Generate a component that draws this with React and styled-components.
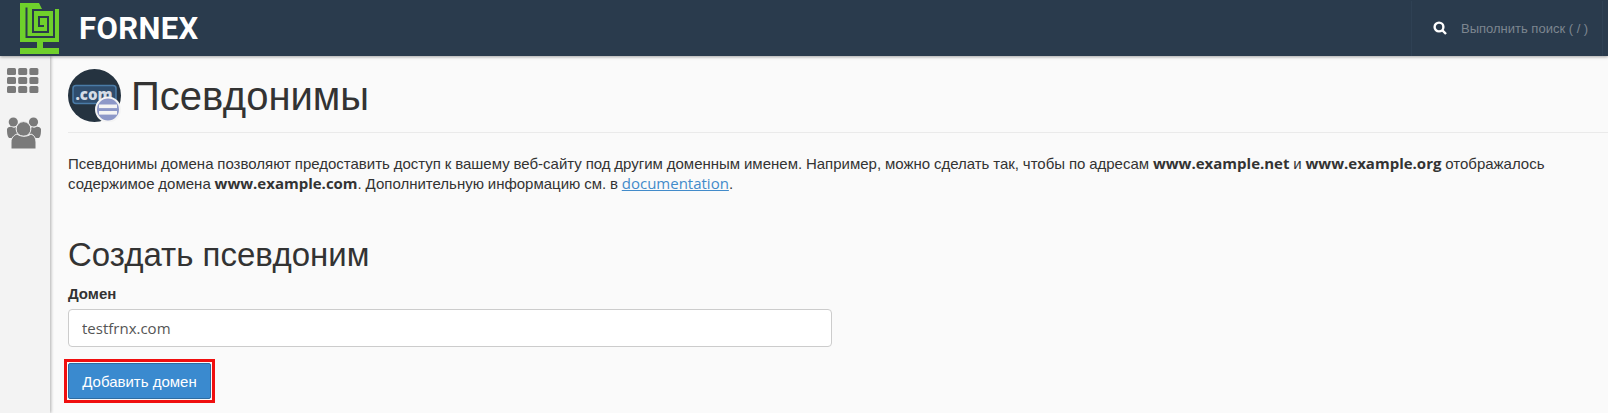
import React from 'react'
import styled, { createGlobalStyle } from 'styled-components'

const GlobalStyle = createGlobalStyle`
  html, body {
    margin: 0;
    height: 100%;
    overflow: hidden;
    background: #fafafa;
    font-family: "Liberation Sans", sans-serif;
    color: #333;
  }
`

const Page = styled.div`
  height: 413px;
  display: flex;
  flex-direction: column;
`

const Header = styled.header`
  height: 56px;
  flex: none;
  display: flex;
  align-items: center;
  background: #2a3b4d;
  box-shadow: 0 1px 3px rgba(0, 0, 0, 0.35);
  position: relative;
  z-index: 2;
`

const Logo = styled.div`
  display: flex;
  align-items: center;
  padding-left: 20px;
  gap: 19px;
  flex: 1;
`

const LogoText = styled.span`
  font-family: "Roboto", sans-serif;
  font-weight: 700;
  font-size: 31px;
  letter-spacing: 0.4px;
  color: #fff;
`

const SearchBox = styled.div`
  width: 192px;
  margin-right: 5px;
  height: 55px;
  box-sizing: border-box;
  border-left: 1px solid #2f4154;
  border-right: 1px solid #2f4154;
  display: flex;
  align-items: center;
  gap: 14px;
  padding-left: 21px;
  font-size: 13px;
  color: #7d8690;
  white-space: nowrap;
`

const Body = styled.div`
  flex: 1;
  display: flex;
  min-height: 0;
`

const Sidebar = styled.nav`
  width: 50px;
  flex: none;
  box-sizing: border-box;
  background: #f3f3f3;
  box-shadow: 1px 0 3px rgba(0, 0, 0, 0.3);
  display: flex;
  flex-direction: column;
  align-items: flex-start;
  padding: 12px 0 0 7px;
  gap: 24px;
`

const Main = styled.main`
  flex: 1;
  padding: 13px 0 0 18px;
  min-width: 0;
`

const TitleRow = styled.div`
  display: flex;
  align-items: center;
  gap: 10px;
  padding-bottom: 10px;
  border-bottom: 1px solid #eaeaea;
`

const Title = styled.h1`
  margin: 0;
  font-size: 40px;
  font-weight: 400;
  line-height: 52px;
  color: #333;
`

const Intro = styled.p`
  margin: 21px 0 0;
  font-size: 15px;
  line-height: 20px;
  word-spacing: -0.35px;
  color: #333;
  white-space: nowrap;
`

const Latin = styled.span`
  font-family: "Open Sans", sans-serif;
  font-weight: ${({ $bold }) => ($bold ? 700 : 400)};
  line-height: 1;
`

const DocLink = styled.a`
  font-family: "Open Sans", sans-serif;
  color: #428bca;
  line-height: 1;
  text-decoration: underline;
`

const Subtitle = styled.h2`
  margin: 40px 0 0;
  font-size: 33px;
  font-weight: 400;
  line-height: 42px;
  color: #333;
`

const Label = styled.label`
  display: block;
  margin-top: 8px;
  font-size: 15px;
  font-weight: 700;
  line-height: 20px;
`

const Input = styled.input`
  display: block;
  box-sizing: border-box;
  width: 764px;
  height: 38px;
  margin-top: 5px;
  padding: 0 13px;
  border: 1px solid #ccc;
  border-radius: 4px;
  background: #fff;
  font: 400 15px "Open Sans", sans-serif;
  color: #555;
  outline: none;
`

const Highlight = styled.div`
  width: fit-content;
  margin: 12px 0 0 -4px;
  padding: 1px;
  border: 3px solid #f00f0f;
`

const Button = styled.button`
  display: block;
  box-sizing: border-box;
  width: 143px;
  height: 36px;
  border: 1px solid #2d6ca2;
  border-radius: 2px;
  background: #3a8acf;
  color: #fff;
  font: 400 15px "Liberation Sans", sans-serif;
  padding: 0;
`

const LogoMark = () => (
  <svg width="40" height="53" viewBox="0 0 40 53" fill="none">
    <path d="M0 1H19L22 7H39V40H0Z" fill="#6fd02b" />
    <path d="M6.5 5.5V35H34V8H13V30H28V15H19V24H24" stroke="#2a3b4d" strokeWidth="2" />
    <path d="M17 40H23V46H17Z" fill="#6fd02b" />
    <path d="M0 46H39V52H0Z" fill="#6fd02b" />
  </svg>
)

const GridIcon = () => (
  <svg width="32" height="25" viewBox="0 0 32 25" fill="#7a7a7a">
    {[0, 11.2, 22.4].map((x) =>
      [0, 9, 18].map((y) => <rect key={`${x}-${y}`} x={x} y={y} width="9" height="7" rx="1.5" />)
    )}
  </svg>
)

const UsersIcon = () => (
  <svg width="34" height="32" viewBox="0 0 34 32" fill="#7a7a7a">
    <circle cx="6.3" cy="5" r="4.6" />
    <circle cx="26.5" cy="5" r="4.6" />
    <path d="M0 12c1-2 3-2.5 5-2 1 1 3 1 4 0l5 5-8 6H2c-2-2-2-6-2-9ZM34 12c-1-2-3-2.5-5-2-1 1-3 1-4 0l-5 5 8 6h4c2-2 2-6 2-9Z" />
    <circle cx="16.5" cy="12" r="7.4" fill="#7a7a7a" stroke="#f3f3f3" strokeWidth="1" />
    <path d="M4 32V25c0-4 3-7 6-8 4 3 10 3 14 0 3 1 5 4 5 8v7Z" stroke="#f3f3f3" strokeWidth="1" />
  </svg>
)

const DomainIcon = () => (
  <svg width="53" height="53" viewBox="0 0 53 53">
    <circle cx="26.5" cy="26.5" r="26.5" fill="#253340" />
    <rect x="5" y="16.5" width="43" height="18" rx="3" fill="#2f4d6d" stroke="#4a7ba7" strokeWidth="1.5" />
    <text x="26" y="31" textAnchor="middle" fontFamily="Open Sans" fontWeight="800" fontSize="15" fill="#d4dce6">.com</text>
    <circle cx="40" cy="40.5" r="12" fill="#8d98c8" stroke="#f4f4f4" strokeWidth="2" />
    <rect x="31" y="35.5" width="18" height="3.6" fill="#f4f4f4" />
    <rect x="31" y="42" width="18" height="3.6" fill="#f4f4f4" />
  </svg>
)

const SearchIcon = () => (
  <svg width="14" height="14" viewBox="0 0 14 14" fill="none" stroke="#fff" strokeWidth="2.4">
    <circle cx="6" cy="6" r="4.4" />
    <path d="M9.2 9.2 13 13" />
  </svg>
)

export default function App() {
  return (
    <Page>
      <GlobalStyle />
      <Header>
        <Logo>
          <LogoMark />
          <LogoText>FORNEX</LogoText>
        </Logo>
        <SearchBox>
          <SearchIcon />
          <span>Выполнить поиск ( / )</span>
        </SearchBox>
      </Header>
      <Body>
        <Sidebar>
          <GridIcon />
          <UsersIcon />
        </Sidebar>
        <Main>
          <TitleRow>
            <DomainIcon />
            <Title>Псевдонимы</Title>
          </TitleRow>
          <Intro>
            Псевдонимы домена позволяют предоставить доступ к вашему веб-сайту под другим доменным именем. Например, можно сделать так, чтобы по адресам <Latin $bold>www.example.net</Latin> и <Latin $bold>www.example.org</Latin> отображалось
            <br />
            содержимое домена <Latin $bold>www.example.com</Latin>. Дополнительную информацию см. в <DocLink href="#docs">documentation</DocLink>.
          </Intro>
          <Subtitle>Создать псевдоним</Subtitle>
          <Label htmlFor="domain">Домен</Label>
          <Input id="domain" defaultValue="testfrnx.com" />
          <Highlight>
            <Button>Добавить домен</Button>
          </Highlight>
        </Main>
      </Body>
    </Page>
  )
}
